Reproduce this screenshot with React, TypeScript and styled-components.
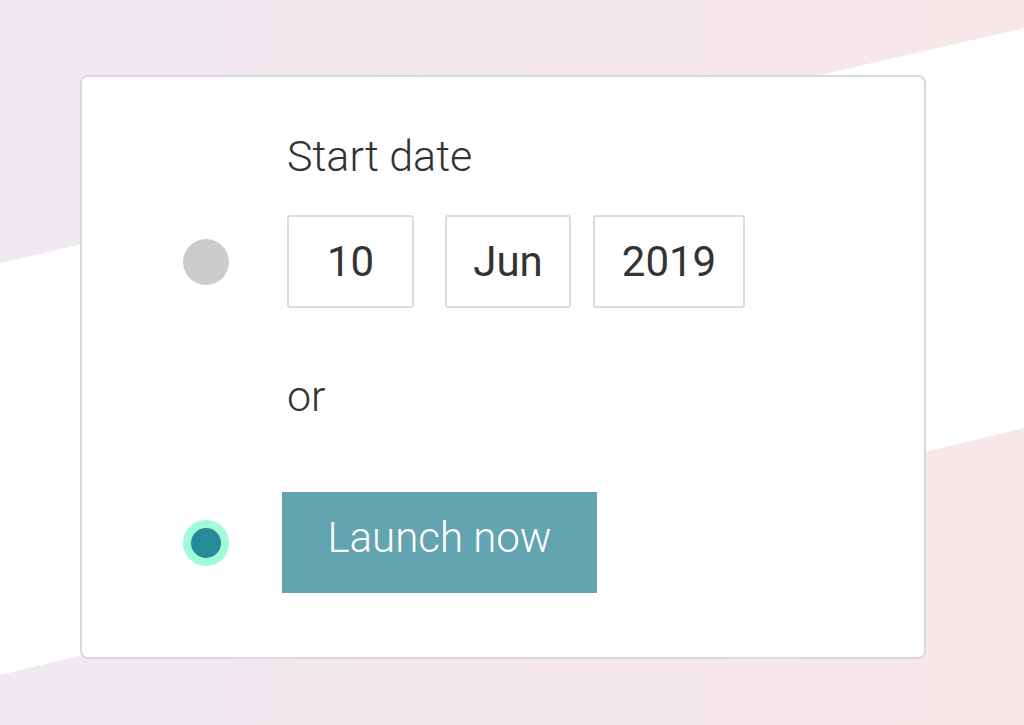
import React from "react";
import styled, { createGlobalStyle } from "styled-components";

const GlobalStyle = createGlobalStyle`
  html, body {
    margin: 0;
    padding: 0;
  }
  body {
    font-family: Roboto, "Liberation Sans", Arial, sans-serif;
    color: #333;
    background: linear-gradient(90deg, #efe9f1 0%, #f8e7e9 100%);
    min-height: 725px;
  }
`;

const Page = styled.main`
  position: relative;
  min-height: 725px;
  box-sizing: border-box;
  padding: 75px 0 0 80px;

  &::before {
    content: "";
    position: absolute;
    inset: 0;
    background: #ffffff;
    clip-path: polygon(0 263px, 100% 28px, 100% 428px, 0 675px);
  }
`;

const Card = styled.section`
  position: relative;
  width: 846px;
  height: 584px;
  box-sizing: border-box;
  background: #ffffff;
  border: 2px solid #dadada;
  border-radius: 8px;
  padding: 54px 0 0 101px;
  display: grid;
  grid-template-columns: 46px auto;
  column-gap: 58px;
  align-content: start;
  align-items: center;
  justify-items: start;
`;

const Label = styled.div<{ $top?: number }>`
  grid-column: 2;
  margin-top: ${(p) => p.$top ?? 0}px;
  font-size: 43px;
  font-weight: 300;
  line-height: 50px;
  color: #333;
`;

const Radio = styled.span<{ $checked?: boolean; $top?: number }>`
  grid-column: 1;
  margin-top: ${(p) => p.$top ?? 0}px;
  width: 46px;
  height: 46px;
  border-radius: 50%;
  box-sizing: border-box;
  background: ${(p) => (p.$checked ? "#268b98" : "#cccccc")};
  border: ${(p) => (p.$checked ? "8px solid #a0fcd7" : "none")};
`;

const DateRow = styled.div<{ $top?: number }>`
  grid-column: 2;
  margin-top: ${(p) => p.$top ?? 0}px;
  display: flex;
  align-items: center;
`;

const DateBox = styled.div<{ $width: number; $gap?: number }>`
  width: ${(p) => p.$width}px;
  height: 93px;
  box-sizing: border-box;
  margin-left: ${(p) => p.$gap ?? 0}px;
  border: 2px solid #dcdcdc;
  border-radius: 3px;
  background: #fff;
  display: flex;
  align-items: center;
  justify-content: center;
  font-size: 42px;
  font-weight: 400;
  color: #333;
`;

const LaunchButton = styled.button<{ $top?: number }>`
  grid-column: 2;
  margin-top: ${(p) => p.$top ?? 0}px;
  margin-left: -5px;
  width: 315px;
  height: 101px;
  border: none;
  border-radius: 0;
  background: #62a4b0;
  color: #ffffff;
  font-family: Roboto, "Liberation Sans", Arial, sans-serif;
  font-size: 42px;
  font-weight: 300;
  padding: 0 0 10px;
  cursor: pointer;
`;

export default function App() {
  return (
    <>
      <GlobalStyle />
      <Page>
        <Card>
          <Label>Start date</Label>
          <Radio $top={34} />
          <DateRow $top={34}>
            <DateBox $width={127}>10</DateBox>
            <DateBox $width={126} $gap={31}>Jun</DateBox>
            <DateBox $width={152} $gap={22}>2019</DateBox>
          </DateRow>
          <Label $top={63}>or</Label>
          <Radio $checked $top={71} />
          <LaunchButton $top={71}>Launch now</LaunchButton>
        </Card>
      </Page>
    </>
  );
}
